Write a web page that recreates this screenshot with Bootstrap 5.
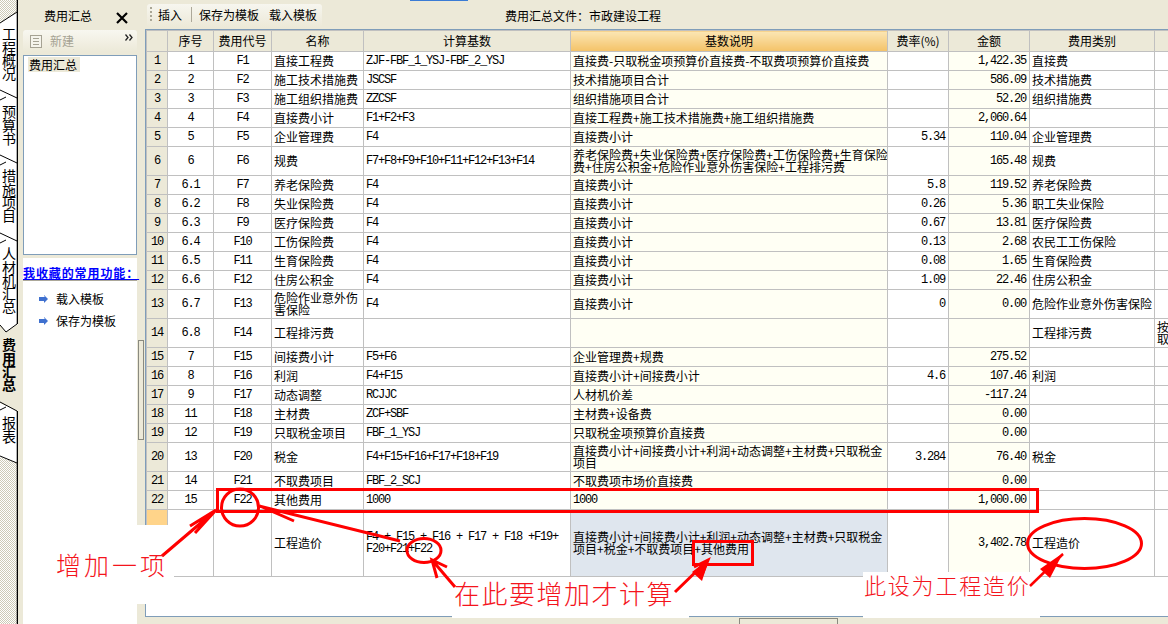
<!DOCTYPE html>
<html lang="zh">
<head>
<meta charset="utf-8">
<title>费用汇总</title>
<link href="https://cdn.jsdelivr.net/npm/bootstrap@5.3.0/dist/css/bootstrap.min.css" rel="stylesheet">
<style>
html,body{margin:0;height:624px;overflow:hidden}
body{background:#ece9d8;color:#000;font:12px/12px "Noto Sans CJK SC",sans-serif;position:relative}
.shell{height:624px}
.topmark{position:absolute;left:410px;top:0;width:58px;height:1px;background:#3a7bd5}
.tabstrip{width:18px;flex:none;position:relative;background:#fff;overflow:hidden}
.tabart{position:absolute;left:0;top:0;width:18px;height:624px}
.tablabel{position:relative;width:17px;font-size:14px;line-height:17px;writing-mode:vertical-rl;text-orientation:upright;letter-spacing:-.8px}
.tabstack{padding-top:27px;gap:25px}
.tablabel.on{font-weight:700}
.gutter{width:5px;flex:none}
.sidepanel{width:114px;flex:none}
.panelhead{height:30px;padding:8px 9px 0 21px;line-height:16px}
.newbar{height:22px;background:linear-gradient(#f8f7f0,#ece9d8);border-radius:3px;color:#a5a293;padding-left:7px;margin-bottom:3px}
.listbox{height:200px;background:#fff;border:1px solid #7f9db9;padding:1px 4px;flex:none}
.listitem{background:#ece9d8;width:52px;height:15px;line-height:15px;padding-left:1px}
.favbox{background:#fff;margin-top:3px;flex:1}
.favtitle{color:#00f;font-weight:700;text-decoration:underline;height:23px;padding-top:8px;line-height:13px;border-bottom:2px solid #aca899;white-space:nowrap;letter-spacing:.9px}
.favitem{padding-left:16px;height:22px;line-height:22px}
.favlist{padding-top:7px}
.splitcol{width:8px;flex:none;padding:340px 1px 0}
.splitgrip{height:100px;width:6px;border:1px solid #8a8a80;background:#ece9d8}
.mainpane{min-width:0}
.toolrow{height:29px;flex:none}
.toolgroup{margin:4px 0 2px 2px;width:175px;height:23px;background:linear-gradient(#f7f6ef,#ece9d8);border-radius:3px;padding:0 0 2px 3px;line-height:21px;flex:none}
.grip{width:2px;height:15px;margin-right:6px;background:repeating-linear-gradient(#a9a695 0 2px,transparent 2px 4px)}
.toolsep{width:1px;height:15px;background:#aca899;margin:0 7px 0 9px}
.toolgap{margin-left:10px}
.doctitle{margin-left:183px;line-height:31px}
.gridbox{height:588px;background:#fff;border:solid #7f9db9;border-width:1px 0 1px 1px;overflow:hidden;flex:none}
.gridt{table-layout:fixed;width:1037px;border-color:#c0c0c0;margin:0;font-size:12px;line-height:12px;border-collapse:collapse}
.gridt>:not(caption)>*>*{padding:0 2px;vertical-align:middle;overflow:hidden;white-space:nowrap;height:19px;color:#000}
.gridt>:not(caption)>.tall>*{height:29px}
.gridt>:not(caption)>.huge>*{height:67px}
.gridt>:not(caption)>.head>*{height:21px;text-align:center;--bs-table-bg:#ece9d8}
.gridt>:not(caption)>.head>.picked{--bs-table-bg:#f6cc7c;background-image:linear-gradient(#fbe6b4,#f4c267)}
.gridt .rowno{--bs-table-bg:#ece9d8;text-align:center}
.gridt .rowmark{--bs-table-bg:#ffd48a}
.gridt .cream{--bs-table-bg:#fffff4}
.gridt .chosen{--bs-table-bg:#dfe6ee}
.gridt .mono{font-family:"Liberation Mono",monospace;font-size:12px;letter-spacing:-1.2px}
.gridt .ctr{text-align:center}
.gridt .rgt{text-align:right;padding-right:3px}
.footbar{flex:1;position:relative}
.hscroll{position:absolute;left:594px;top:1px;width:99px;height:8px;border:1px solid #8a8a80;background:#ece9d8}
.overart{position:absolute;left:0;top:0;width:1168px;height:624px;pointer-events:none}
.patch{position:absolute;background:#fff}
.note{position:absolute;color:#f4141c;white-space:nowrap;line-height:1;font-weight:300}
.note1{left:56px;top:552px;font-size:25px;letter-spacing:3px}
.note2{left:454px;top:580px;font-size:26px;letter-spacing:1.5px}
.note3{left:864px;top:573px;font-size:22px;letter-spacing:1.8px}
</style>
</head>
<body>
<div class="topmark"></div>
<div class="shell d-flex">
  <div class="tabstrip">
    <svg class="tabart" viewBox="0 0 18 624" aria-hidden="true">
      <defs><pattern id="hatch" width="2" height="2" patternUnits="userSpaceOnUse"><rect width="2" height="2" fill="#fff"/><rect width="1" height="1" fill="#cdcab6"/><rect x="1" y="1" width="1" height="1" fill="#cdcab6"/></pattern></defs>
      <polygon points="0,0 18,0 18,12 0,23" fill="url(#hatch)"/>
      <polygon points="0,457 18,463 18,624 0,624" fill="url(#hatch)"/>
      <polygon points="0,325 6,332 18,324 18,411 0,403" fill="#ece9d8"/>
      <g stroke="#000" fill="none" stroke-width="1">
        <path d="M0 23 17 12M0 90 17 98M0 100 6 97M0 155 17 163M0 165 6 162M0 233 17 241M0 243 6 240M0 325 6 332 17 324M0 402 17 411M0 410 6 407M0 456 17 463"/>
        <path d="M17.5 0V324M17.5 411V624" stroke-width="1.6"/>
      </g>
    </svg>
    <div class="tabstack d-flex flex-column">
      <div class="tablabel">工程概况</div>
      <div class="tablabel">预算书</div>
      <div class="tablabel">措施项目</div>
      <div class="tablabel">人材机汇总</div>
      <div class="tablabel on">费用汇总</div>
      <div class="tablabel">报表</div>
    </div>
  </div>
  <div class="gutter"></div>
  <div class="sidepanel d-flex flex-column">
    <div class="panelhead d-flex justify-content-between align-items-start">
      <span>费用汇总</span>
      <svg width="12" height="12" viewBox="0 0 12 12" class="mt-1" aria-hidden="true"><path d="M1 1 11 11M11 1 1 11" stroke="#000" stroke-width="2.2"/></svg>
    </div>
    <div class="newbar d-flex align-items-center gap-1">
      <svg width="12" height="13" viewBox="0 0 12 13" aria-hidden="true"><rect x=".5" y=".5" width="11" height="12" fill="#f5f4ec" stroke="#a5a293"/><path d="M3 3.5H9M3 6.500H9M3 9.500H9" stroke="#a5a293"/></svg>
      <span class="ms-1 flex-grow-1">新建</span>
      <svg class="me-1 mb-2" width="8" height="7" viewBox="0 0 8 7" aria-hidden="true"><path d="M.5 .5 3 3.500 .5 6.500M4.500 .5 7 3.500 4.500 6.500" fill="none" stroke="#222" stroke-width="1.300"/></svg>
    </div>
    <div class="listbox"><div class="listitem">费用汇总</div></div>
    <div class="favbox">
      <div class="favtitle">我收藏的常用功能：</div>
      <div class="favlist">
        <div class="favitem d-flex align-items-center gap-2"><svg width="9" height="8" viewBox="0 0 9 8" aria-hidden="true"><path d="M0 2H5V0L9 4 5 8V6H0Z" fill="#3f70cf"/><path d="M0 2H5V0L7 2Z" fill="#a6c0ee"/></svg><span>载入模板</span></div>
        <div class="favitem d-flex align-items-center gap-2"><svg width="9" height="8" viewBox="0 0 9 8" aria-hidden="true"><path d="M0 2H5V0L9 4 5 8V6H0Z" fill="#3f70cf"/><path d="M0 2H5V0L7 2Z" fill="#a6c0ee"/></svg><span>保存为模板</span></div>
      </div>
    </div>
  </div>
  <div class="splitcol"><div class="splitgrip"></div></div>
  <div class="mainpane flex-grow-1 d-flex flex-column">
    <div class="toolrow d-flex">
      <div class="toolgroup d-flex align-items-center">
        <span class="grip"></span><span>插入</span><span class="toolsep"></span><span>保存为模板</span><span class="toolgap">载入模板</span>
      </div>
      <div class="doctitle">费用汇总文件：市政建设工程</div>
    </div>
    <div class="gridbox">
      <table class="table table-bordered gridt">
        <colgroup><col style="width:21px"><col style="width:46px"><col style="width:58px"><col style="width:92px"><col style="width:207px"><col style="width:317px"><col style="width:61px"><col style="width:81px"><col style="width:125px"><col style="width:29px"></colgroup>
        <thead>
          <tr class="head"><th class="fw-normal"></th><th class="fw-normal">序号</th><th class="fw-normal">费用代号</th><th class="fw-normal">名称</th><th class="fw-normal">计算基数</th><th class="fw-normal picked">基数说明</th><th class="fw-normal">费率(%)</th><th class="fw-normal">金额</th><th class="fw-normal">费用类别</th><th class="fw-normal"></th></tr>
        </thead>
        <tbody>
          <tr><td class="rowno mono">1</td><td class="mono ctr">1</td><td class="mono ctr">F1</td><td>直接工程费</td><td class="mono">ZJF-FBF_1_YSJ-FBF_2_YSJ</td><td class="cream">直接费-只取税金项预算价直接费-不取费项预算价直接费</td><td class="mono rgt"></td><td class="cream mono rgt">1,422.35</td><td>直接费</td><td></td></tr>
          <tr><td class="rowno mono">2</td><td class="mono ctr">2</td><td class="mono ctr">F2</td><td>施工技术措施费</td><td class="mono">JSCSF</td><td class="cream">技术措施项目合计</td><td class="mono rgt"></td><td class="cream mono rgt">586.09</td><td>技术措施费</td><td></td></tr>
          <tr><td class="rowno mono">3</td><td class="mono ctr">3</td><td class="mono ctr">F3</td><td>施工组织措施费</td><td class="mono">ZZCSF</td><td class="cream">组织措施项目合计</td><td class="mono rgt"></td><td class="cream mono rgt">52.20</td><td>组织措施费</td><td></td></tr>
          <tr><td class="rowno mono">4</td><td class="mono ctr">4</td><td class="mono ctr">F4</td><td>直接费小计</td><td class="mono">F1+F2+F3</td><td class="cream">直接工程费+施工技术措施费+施工组织措施费</td><td class="mono rgt"></td><td class="cream mono rgt">2,060.64</td><td></td><td></td></tr>
          <tr><td class="rowno mono">5</td><td class="mono ctr">5</td><td class="mono ctr">F5</td><td>企业管理费</td><td class="mono">F4</td><td class="cream">直接费小计</td><td class="mono rgt">5.34</td><td class="cream mono rgt">110.04</td><td>企业管理费</td><td></td></tr>
          <tr class="tall"><td class="rowno mono">6</td><td class="mono ctr">6</td><td class="mono ctr">F6</td><td>规费</td><td class="mono">F7+F8+F9+F10+F11+F12+F13+F14</td><td class="cream">养老保险费+失业保险费+医疗保险费+工伤保险费+生育保险<br>费+住房公积金+危险作业意外伤害保险+工程排污费</td><td class="mono rgt"></td><td class="cream mono rgt">165.48</td><td>规费</td><td></td></tr>
          <tr><td class="rowno mono">7</td><td class="mono ctr">6.1</td><td class="mono ctr">F7</td><td>养老保险费</td><td class="mono">F4</td><td class="cream">直接费小计</td><td class="mono rgt">5.8</td><td class="cream mono rgt">119.52</td><td>养老保险费</td><td></td></tr>
          <tr><td class="rowno mono">8</td><td class="mono ctr">6.2</td><td class="mono ctr">F8</td><td>失业保险费</td><td class="mono">F4</td><td class="cream">直接费小计</td><td class="mono rgt">0.26</td><td class="cream mono rgt">5.36</td><td>职工失业保险</td><td></td></tr>
          <tr><td class="rowno mono">9</td><td class="mono ctr">6.3</td><td class="mono ctr">F9</td><td>医疗保险费</td><td class="mono">F4</td><td class="cream">直接费小计</td><td class="mono rgt">0.67</td><td class="cream mono rgt">13.81</td><td>医疗保险费</td><td></td></tr>
          <tr><td class="rowno mono">10</td><td class="mono ctr">6.4</td><td class="mono ctr">F10</td><td>工伤保险费</td><td class="mono">F4</td><td class="cream">直接费小计</td><td class="mono rgt">0.13</td><td class="cream mono rgt">2.68</td><td>农民工工伤保险</td><td></td></tr>
          <tr><td class="rowno mono">11</td><td class="mono ctr">6.5</td><td class="mono ctr">F11</td><td>生育保险费</td><td class="mono">F4</td><td class="cream">直接费小计</td><td class="mono rgt">0.08</td><td class="cream mono rgt">1.65</td><td>生育保险费</td><td></td></tr>
          <tr><td class="rowno mono">12</td><td class="mono ctr">6.6</td><td class="mono ctr">F12</td><td>住房公积金</td><td class="mono">F4</td><td class="cream">直接费小计</td><td class="mono rgt">1.09</td><td class="cream mono rgt">22.46</td><td>住房公积金</td><td></td></tr>
          <tr class="tall"><td class="rowno mono">13</td><td class="mono ctr">6.7</td><td class="mono ctr">F13</td><td>危险作业意外伤<br>害保险</td><td class="mono">F4</td><td class="cream">直接费小计</td><td class="mono rgt">0</td><td class="cream mono rgt">0.00</td><td>危险作业意外伤害保险</td><td></td></tr>
          <tr class="tall"><td class="rowno mono">14</td><td class="mono ctr">6.8</td><td class="mono ctr">F14</td><td>工程排污费</td><td class="mono"></td><td class="cream"></td><td class="mono rgt"></td><td class="cream mono rgt"></td><td>工程排污费</td><td>按<br>取</td></tr>
          <tr><td class="rowno mono">15</td><td class="mono ctr">7</td><td class="mono ctr">F15</td><td>间接费小计</td><td class="mono">F5+F6</td><td class="cream">企业管理费+规费</td><td class="mono rgt"></td><td class="cream mono rgt">275.52</td><td></td><td></td></tr>
          <tr><td class="rowno mono">16</td><td class="mono ctr">8</td><td class="mono ctr">F16</td><td>利润</td><td class="mono">F4+F15</td><td class="cream">直接费小计+间接费小计</td><td class="mono rgt">4.6</td><td class="cream mono rgt">107.46</td><td>利润</td><td></td></tr>
          <tr><td class="rowno mono">17</td><td class="mono ctr">9</td><td class="mono ctr">F17</td><td>动态调整</td><td class="mono">RCJJC</td><td class="cream">人材机价差</td><td class="mono rgt"></td><td class="cream mono rgt">-117.24</td><td></td><td></td></tr>
          <tr><td class="rowno mono">18</td><td class="mono ctr">11</td><td class="mono ctr">F18</td><td>主材费</td><td class="mono">ZCF+SBF</td><td class="cream">主材费+设备费</td><td class="mono rgt"></td><td class="cream mono rgt">0.00</td><td></td><td></td></tr>
          <tr><td class="rowno mono">19</td><td class="mono ctr">12</td><td class="mono ctr">F19</td><td>只取税金项目</td><td class="mono">FBF_1_YSJ</td><td class="cream">只取税金项预算价直接费</td><td class="mono rgt"></td><td class="cream mono rgt">0.00</td><td></td><td></td></tr>
          <tr class="tall"><td class="rowno mono">20</td><td class="mono ctr">13</td><td class="mono ctr">F20</td><td>税金</td><td class="mono">F4+F15+F16+F17+F18+F19</td><td class="cream">直接费小计+间接费小计+利润+动态调整+主材费+只取税金<br>项目</td><td class="mono rgt">3.284</td><td class="cream mono rgt">76.40</td><td>税金</td><td></td></tr>
          <tr><td class="rowno mono">21</td><td class="mono ctr">14</td><td class="mono ctr">F21</td><td>不取费项目</td><td class="mono">FBF_2_SCJ</td><td class="cream">不取费项市场价直接费</td><td class="mono rgt"></td><td class="cream mono rgt">0.00</td><td></td><td></td></tr>
          <tr><td class="rowno mono">22</td><td class="mono ctr">15</td><td class="mono ctr">F22</td><td>其他费用</td><td class="mono">1000</td><td class="cream mono">1000</td><td class="mono rgt"></td><td class="cream mono rgt">1,000.00</td><td></td><td></td></tr>
          <tr class="huge"><td class="rowmark"></td><td></td><td></td><td>工程造价</td><td class="mono">F4 + F15 + F16 + F17 + F18 +F19+<br>F20+F21+F22</td><td class="chosen">直接费小计+间接费小计+利润+动态调整+主材费+只取税金<br>项目+税金+不取费项目+其他费用</td><td></td><td class="cream mono rgt">3,402.78</td><td>工程造价</td><td></td></tr>
        </tbody>
      </table>
    </div>
    <div class="footbar"><div class="hscroll"></div></div>
  </div>
</div>

<div class="overart">
  <div class="patch" style="left:137px;top:525px;width:37px;height:79px"></div>
  <div class="patch" style="left:452px;top:600px;width:237px;height:18px"></div>
  <div class="patch" style="left:863px;top:572px;width:177px;height:46px"></div>
  <svg class="position-absolute top-0 start-0" width="1168" height="624" viewBox="0 0 1168 624" aria-hidden="true">
    <g fill="none" stroke="#f00" stroke-width="3">
      <rect x="217.500" y="489.500" width="820" height="22"/>
      <ellipse cx="240" cy="507.500" rx="18.500" ry="18.500"/>
      <ellipse cx="424" cy="550.500" rx="17" ry="12"/>
      <ellipse cx="1084.500" cy="543.500" rx="57" ry="25"/>
      <rect x="693.500" y="541.500" width="59" height="23"/>
      <path d="M162 556 216 510M190 526 216 510 195 533"/>
      <path d="M259 506 400 541M260 506 294 521"/>
      <path d="M455 587 432 560M437 578 432 560 447 567"/>
      <path d="M675 592 708 560M694 567 708 560 702 575"/>
      <path d="M1030 586 1063 554" stroke-width="2.500"/>
    </g>
    <path d="M1040 569 1063 553 1050 578Z" fill="#f00"/>
    <path d="M692 572 709 559 702 581Z" fill="#f00"/>
  </svg>
  <div class="note note1">增加一项</div>
  <div class="note note2">在此要增加才计算</div>
  <div class="note note3">此设为工程造价</div>
</div>
</body>
</html>
